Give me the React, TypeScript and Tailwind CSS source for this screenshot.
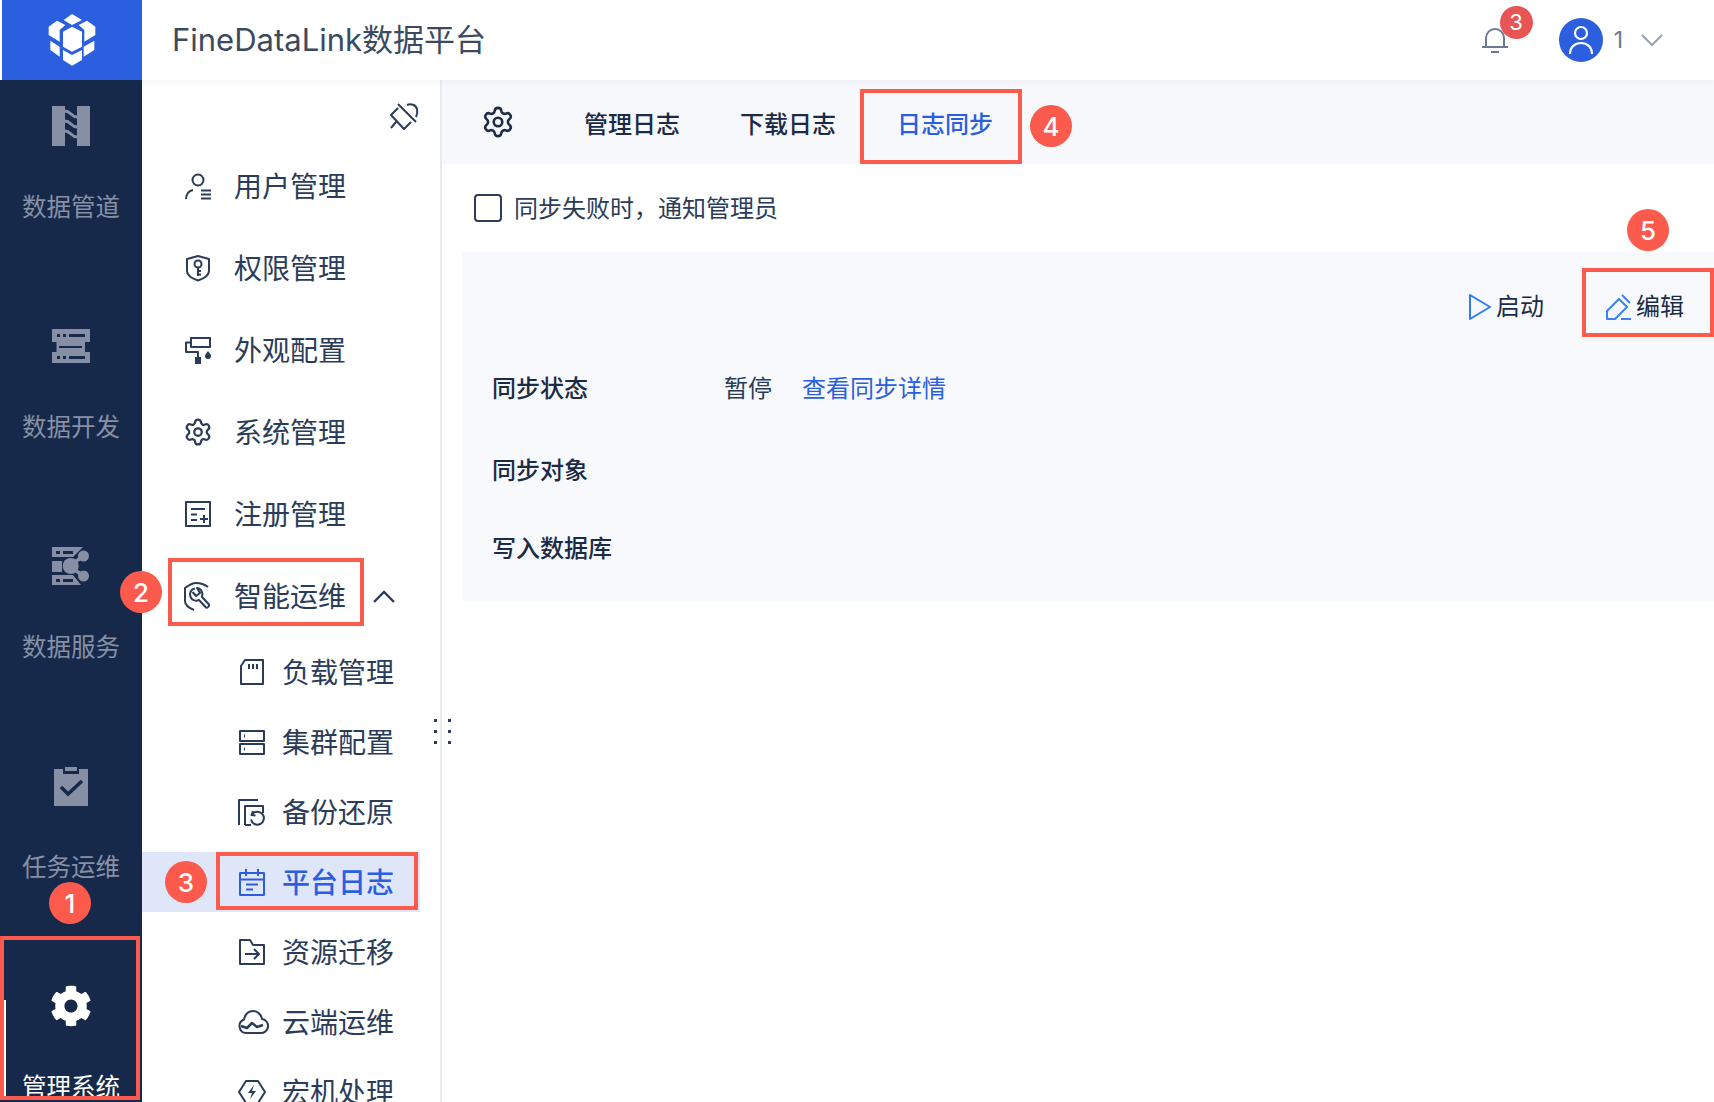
import { Settings } from "lucide-react";
import { FaCog } from "react-icons/fa";
import type { ReactNode } from "react";

const s = { fill: "none", stroke: "currentColor", strokeWidth: 2, strokeLinejoin: "round" as const };

function I({ children, w = 28, h = 28 }: { children: ReactNode; w?: number; h?: number }) {
  return (
    <svg width={w} height={h} viewBox="0 0 28 28" className="overflow-visible" {...s}>
      {children}
    </svg>
  );
}

const menu: { label: string; icon: ReactNode }[] = [
  { label: "用户管理", icon: <I><circle cx="14" cy="8" r="5.5" /><path d="M2 27c0-5 3-8 7-9M17 18.5h10M17 22.5h10M17 26.5h10" /></I> },
  { label: "权限管理", icon: <I><path d="M14 2l11 3v12c0 4-5 7.500-11 9.500C8 24.500 3 21 3 17V5z" /><circle cx="14" cy="10" r="3.500" /><path d="M14 13.500V22M14 17h3M14 20.500h3" /></I> },
  { label: "外观配置", icon: <I><path d="M7 2h19v9H7zM7 6.500H2V16h12v5" /><rect x="11" y="21" width="6" height="7" fill="currentColor" stroke="none" /><path d="M24 15c2 2.500 3 3.500 3 5a3 3 0 0 1-6 0c0-1.500 1-2.500 3-5z" fill="currentColor" stroke="none" /></I> },
  { label: "系统管理", icon: <Settings size={32} strokeWidth={1.8} /> },
  { label: "注册管理", icon: <I><rect x="2" y="2" width="24" height="24" /><path d="M7 9h14M7 14.500h6M7 20h6M16 19h8M20 15v8" /></I> },
  { label: "智能运维", icon: <I><path d="M24 5C20 2 16 1 12 1S5 3 1 6v13c0 4 4 7 9 9" /><path d="M11 6.500C7 7 5 11 6.500 15 8 18.500 12 19.500 15 18l7 7.500c1 1 3.500-1 3-3l-7-7.500C19.500 11 17 6 13 6l3 5-4 3-3.500-4" /></I> },
];

const sub: { label: string; icon: ReactNode; active?: boolean }[] = [
  { label: "负载管理", icon: <I><path d="M7 2h18v24H3V8zM11 6v5M15 6v5M19 6v5" /></I> },
  { label: "集群配置", icon: <I><rect x="2" y="3" width="24" height="10" /><rect x="2" y="16" width="24" height="10" /><path d="M6 8h1M6 21h1" strokeWidth="3" /></I> },
  { label: "备份还原", icon: <I><path d="M1 27V2h19M7 27V8h18v7M7 27h6" /><path d="M14 16.500a6.500 6.500 0 1 1-1 5M15 13l-1.500 4 4 .5" /></I> },
  { label: "平台日志", active: true, icon: <I><path d="M2 5h24v22H2zM8 1v7M20 1v7M2 11.500h24M8 16.500h12M8 21.500h7" /></I> },
  { label: "资源迁移", icon: <I><path d="M2 26V2h10l3 5h11v19zM7 16h14M16 11l5 5-5 5" /></I> },
  { label: "云端运维", icon: <I><path d="M8 25a7 7 0 0 1-2-13.500C7 7 10 3 15 3c4 0 8 3 9 8a7 7 0 0 1-2 14z" /><path d="M3 18l6 2 5-5 5 4 6-2" strokeWidth="2.500" /></I> },
  { label: "宏机处理", icon: <I><path d="M8 3h12l7 11-7 11H8L1 14z" /><path d="M16 7l-6 8h4l-2 6 6-8h-4z" fill="currentColor" stroke="none" /></I> },
];

const nav: { label: string; icon: ReactNode; active?: boolean }[] = [
  {
    label: "数据管道",
    icon: (
      <svg width="38" height="40" viewBox="0 0 38 40">
        <rect width="13" height="40" fill="#878fa5" />
        <rect x="25" width="13" height="40" fill="#878fa5" />
        <path d="M13 5c6 0 6 6 12 6M13 15c6 0 6 6 12 6M13 25c6 0 6 6 12 6" fill="none" stroke="#878fa5" strokeWidth="3" />
      </svg>
    ),
  },
  {
    label: "数据开发",
    icon: (
      <svg width="38" height="40" viewBox="0 0 38 40">
        <g fill="#878fa5">
          <rect y="3" width="38" height="13" />
          <rect x="4.500" y="16" width="28.500" height="10" />
          <rect y="26" width="38" height="11" />
        </g>
        <g fill="#16294a">
          <rect x="5" y="8" width="3" height="3" />
          <rect x="11" y="8" width="3" height="3" />
          <rect x="17" y="8" width="16" height="3" />
          <rect x="7" y="20" width="23" height="2" />
          <rect x="5" y="30" width="3" height="3" />
          <rect x="11" y="30" width="3" height="3" />
          <rect x="17" y="30" width="16" height="3" />
        </g>
      </svg>
    ),
  },
  {
    label: "数据服务",
    icon: (
      <svg width="38" height="40" viewBox="0 0 38 40">
        <g fill="#878fa5">
          <path d="M0 1h31L21 11H0zM0 15h10v11H0zM0 29h21l8 10H0z" />
          <circle cx="31.500" cy="10" r="5.500" />
          <circle cx="31.500" cy="30" r="5.500" />
          <circle cx="18.700" cy="20" r="8" />
        </g>
        <path d="M18 20L31 10M18 20l13 10" stroke="#878fa5" strokeWidth="3.500" />
        <g fill="#16294a">
          <rect x="4" y="5" width="4" height="3" />
          <rect x="11" y="5" width="10" height="3" />
          <rect x="4" y="33" width="4" height="3" />
          <rect x="11" y="33" width="10" height="3" />
        </g>
      </svg>
    ),
  },
  {
    label: "任务运维",
    icon: (
      <svg width="38" height="40" viewBox="0 0 38 40">
        <path d="M2 3h9v5h16V3h9v37H2z" fill="#878fa5" />
        <rect x="13" y="1" width="12" height="4" fill="#878fa5" />
        <path d="M9 21l7 7 14-13" fill="none" stroke="#16294a" strokeWidth="3.500" />
      </svg>
    ),
  },
  { label: "管理系统", active: true, icon: <FaCog size={42} color="#ffffff" /> },
];

function Badge({ n, x, y }: { n: number; x: number; y: number }) {
  return (
    <div
      className="absolute w-[42px] h-[42px] rounded-full bg-[#fb5a4c] text-white text-[26px] font-medium flex items-center justify-center z-20"
      style={{ left: x - 21, top: y - 21 }}
    >
      {n}
    </div>
  );
}

function Box({ x, y, w, h }: { x: number; y: number; w: number; h: number }) {
  return (
    <div
      className="absolute border-[4px] border-[#fb5a4c] z-10"
      style={{ left: x, top: y, width: w, height: h }}
    />
  );
}

export default function App() {
  return (
    <div className="relative w-[1714px] h-[1102px] overflow-hidden flex flex-col bg-white text-[#2b3c5a] font-['Inter','Noto_Sans_CJK_SC',sans-serif]">
      <header className="relative z-[5] h-[80px] shrink-0 flex items-center bg-white shadow-[0_2px_6px_rgba(30,50,90,0.05)]">
        <div className="ml-[2px] w-[140px] h-full bg-[#2b5fe0] flex items-center justify-center">
          <svg width="48" height="52" viewBox="143 42 144 156" fill="#ffffff">
            <path d="M190 60l25-18 30 18-30 15z" />
            <path d="M145 80l25-18 25 13-17 15v35l-33-20z" />
            <path d="M285 80l-25-18-25 13 17 15v35l33-20z" />
            <path d="M150 122l28 18v30l-28-20z" />
            <path d="M282 122l-32 18v30l32-20z" />
            <path d="M188 95l27-15 30 15v45l-30 15-27-15z" />
            <path d="M188 150l27 15 30-15v30l-30 17-27-17z" />
          </svg>
        </div>
        <div className="ml-[30px] pb-[2px] text-[31px] leading-none text-[#3c4a60]">FineDataLink数据平台</div>
        <div className="ml-auto flex items-center pr-[51px]">
          <div className="relative w-[26px] h-[28px] text-[#6b7a90]">
            <svg width="26" height="28" viewBox="0 0 26 28" fill="none" stroke="currentColor" strokeWidth="2">
              <path d="M4 20v-8a9 9 0 0 1 18 0v8M0 21h26M9 26h8" />
            </svg>
            <div className="absolute left-[18px] top-[-20px] w-[33px] h-[33px] rounded-full bg-[#e85555] text-white text-[22px] flex items-center justify-center">3</div>
          </div>
          <div className="ml-[51px] w-[44px] h-[44px] rounded-full bg-[#2b5fe0] flex items-center justify-center">
            <svg width="26" height="32" viewBox="0 0 26 32" fill="none" stroke="#ffffff" strokeWidth="2.200">
              <circle cx="13" cy="9" r="6" />
              <path d="M2 30c0-7 5-11 11-11s11 4 11 11" />
            </svg>
          </div>
          <div className="ml-[11px] text-[23px] text-[#6b7a90]">1</div>
          <svg width="22" height="13" viewBox="0 0 22 13" fill="none" stroke="#97a2b3" strokeWidth="2" className="ml-[18px]">
            <path d="M1 1l10 10L21 1" />
          </svg>
        </div>
      </header>

      <div className="flex flex-1 min-h-0">
        <nav className="w-[142px] shrink-0 bg-[#16294a] overflow-hidden relative">
          {nav.map((n) => (
            <div key={n.label} className="h-[220px] flex flex-col items-center pt-[26px]">
              <div className="h-[40px] flex items-center justify-center">{n.icon}</div>
              <div className={`mt-[45px] text-[24.5px] leading-[32px] ${n.active ? "text-white" : "text-[#8790a5]"}`}>{n.label}</div>
            </div>
          ))}
          <div className="absolute left-[4px] top-[920px] w-[2px] h-[96px] bg-white" />
        </nav>

        <aside className="relative w-[300px] shrink-0 border-r-2 border-[#e8eaf2] overflow-hidden">
          <div className="h-[65px] flex justify-end pt-[22px] pr-[22px]">
            <I>
              <path d="M8 2l18 18M17 3c4-2 9 0 10 4s0 6-1 8M8 6L1 13l13 14 7-7M6 20l-5 6" />
            </I>
          </div>
          {menu.map((m, i) => (
            <div key={m.label} className="h-[82px] flex items-center pl-[41px]">
              <div className="w-[30px] flex justify-center">{m.icon}</div>
              <span className="ml-[21px] pt-[2px] text-[28px] leading-none">{m.label}</span>
              {i === 5 && (
                <svg width="22" height="13" viewBox="0 0 22 13" fill="none" stroke="currentColor" strokeWidth="2.400" className="ml-[27px]">
                  <path d="M1 12L11 2l10 10" />
                </svg>
              )}
            </div>
          ))}
          {sub.map((m) => (
            <div key={m.label} className="h-[70px] py-[5px]">
              <div className={`h-[60px] w-[278px] flex items-center pl-[96px] ${m.active ? "bg-[#dfe6f9] text-[#2b5fe0] font-medium" : ""}`}>
                <div className="w-[28px] flex justify-center">{m.icon}</div>
                <span className="ml-[16px] pt-[2px] text-[28px] leading-none">{m.label}</span>
              </div>
            </div>
          ))}
        </aside>

        <main className="flex-1 min-w-0 flex flex-col">
          <div className="h-[84px] shrink-0 bg-[#f6f8fc] flex items-center pl-[39px] text-[24px] font-medium text-[#1c2b45]">
            <Settings size={34} strokeWidth={1.8} />
            <span className="ml-[69px] pt-[6px]">管理日志</span>
            <span className="ml-[60px] pt-[6px]">下载日志</span>
            <span className="ml-[61px] pt-[6px] text-[#2b5fe0]">日志同步</span>
          </div>
          <div className="h-[88px] shrink-0 flex items-center pl-[32px]">
            <div className="w-[28px] h-[28px] rounded-[4px] border-2 border-[#2b3c5a]" />
            <span className="ml-[12px] pt-[2px] text-[24px]">同步失败时，通知管理员</span>
          </div>
          <div className="ml-[20px] h-[349px] bg-[#f7f9fd] text-[24px] leading-[32px]">
            <div className="pt-[39px] flex justify-end pr-[30px]">
              <div className="flex items-center text-[#1c2b45]">
                <svg width="24" height="28" viewBox="0 0 24 28" fill="none" stroke="#2f7cf0" strokeWidth="2" strokeLinejoin="round">
                  <path d="M2 2l20 12L2 26z" />
                </svg>
                <span className="ml-[4px]">启动</span>
              </div>
              <div className="ml-[62px] flex items-center text-[#1c2b45]">
                <svg width="26" height="26" viewBox="0 0 26 26" fill="none" stroke="#3b82f6" strokeWidth="2" strokeLinejoin="round">
                  <path d="M1 25v-8L13 5l8 8-12 12zM16 1l8 8M15 25h10" />
                </svg>
                <span className="ml-[4px]">编辑</span>
              </div>
            </div>
            <div className="pl-[30px] flex mt-[50px]">
              <span className="w-[233px] font-medium text-[#1c2b45]">同步状态</span>
              <span className="-ml-[1px]">暂停</span>
              <span className="ml-[30px] text-[#2b5fe0]">查看同步详情</span>
            </div>
            <div className="pl-[30px] mt-[50px] font-medium text-[#1c2b45]">同步对象</div>
            <div className="pl-[30px] mt-[46px] font-medium text-[#1c2b45]">写入数据库</div>
          </div>
        </main>
      </div>

      <div className="absolute left-[434px] top-[719px] z-10 grid grid-cols-[3px_3px] gap-x-[11px] gap-y-[8px]">
        {[0, 1, 2, 3, 4, 5].map((d) => (
          <div key={d} className="w-[3px] h-[3px] bg-[#2b3c5a]" />
        ))}
      </div>
      <Box x={0} y={936} w={140} h={164} />
      <Box x={168} y={558} w={196} h={68} />
      <Box x={216} y={852} w={202} h={58} />
      <Box x={860} y={89} w={162} h={75} />
      <Box x={1582} y={268} w={132} h={69} />
      <Badge n={1} x={70} y={903} />
      <Badge n={2} x={141} y={592} />
      <Badge n={3} x={186} y={882} />
      <Badge n={4} x={1051} y={126} />
      <Badge n={5} x={1648} y={230} />
    </div>
  );
}
